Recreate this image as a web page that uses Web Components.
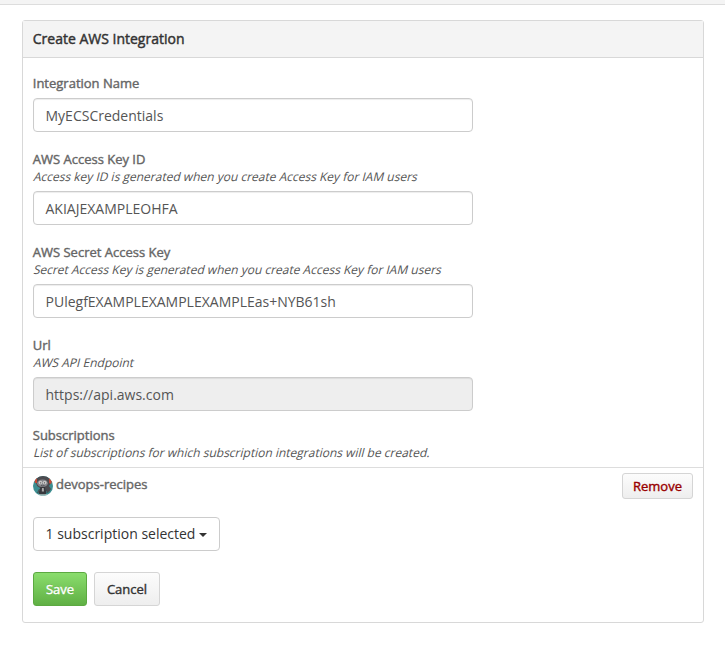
<!DOCTYPE html>
<html lang="en"><head><meta charset="utf-8"><title>Create AWS Integration</title>
<style>
html,body{margin:0;background:#fff;height:647px;overflow:hidden}
body{font:14px/20px "Open Sans","Noto Sans",sans-serif;color:#555}
</style></head><body>
<integration-page></integration-page>
<script>
class FormField extends HTMLElement{
  connectedCallback(){
    const hint=this.getAttribute('hint');
    this.attachShadow({mode:'open'}).innerHTML=`<style>
:host{display:block}
.label{font-size:13px;line-height:18px;color:#666;margin-left:-.25px;-webkit-text-stroke:.4px #666}
.hint{width:max-content;margin-left:.75px;font-size:12px;line-height:17px;color:#555;transform:skewX(-14deg)}
.box{box-sizing:border-box;width:440px;height:34px;border:1px solid #ccc;border-radius:4px;padding:6px 11.5px;line-height:22px;font-size:14px;color:#555;box-shadow:inset 0 1px 1px rgba(0,0,0,.075);margin-top:6px}
:host([disabled]) .box{background:#eee}
:host([bare]) .box{display:none}
</style><div class="label">${this.getAttribute('label')}</div>${hint?`<div class="hint">${hint}</div>`:''}<div class="box"><slot></slot></div>`;
  }
}
customElements.define('form-field',FormField);

class UiButton extends HTMLElement{
  connectedCallback(){
    this.attachShadow({mode:'open'}).innerHTML=`<style>
:host{display:inline-flex;box-sizing:border-box;height:34px;align-items:center;justify-content:center;border:1px solid #d5d5d5;border-radius:3px;font-size:13px;line-height:20px;color:#333;background:linear-gradient(#fcfcfc,#eee)}
:host([kind=save]){color:#fff;border-color:#5ca941;background:linear-gradient(#8add6d,#60b044);-webkit-text-stroke:.4px #fff;text-shadow:0 -1px 0 rgba(0,0,0,.15)}
:host([kind=remove]){height:26px;color:#900;-webkit-text-stroke:.4px #900}
:host([kind=cancel]){-webkit-text-stroke:.4px #333}
:host([kind=select]){background:#fff;border-color:#ccc;border-radius:4px;font-size:14px}
.caret{display:none}
:host([kind=select]) .caret{display:block;margin:2px 0 0 4px;border:4px solid transparent;border-top-color:#333;border-bottom:0}
</style><slot></slot><span class="caret"></span>`;
  }
}
customElements.define('ui-button',UiButton);

class OwnerAvatar extends HTMLElement{
  connectedCallback(){
    this.attachShadow({mode:'open'}).innerHTML=`<style>:host{display:block;width:20px;height:20px}svg{display:block}</style>
<svg width="20" height="20" viewBox="0 0 20 20">
<defs><clipPath id="disc"><circle cx="10" cy="10" r="10"/></clipPath></defs>
<g clip-path="url(#disc)">
<rect width="20" height="20" fill="#3c8e91"/>
<path d="M3 2 5 0H15L17 3 18 7 16 10 18 13 16 16 13 15 12 12H7L4 10 3 7Z" fill="#4c4b50"/>
<path d="M1 3 4 2 4 7 2 7ZM16 2 19 5 18 8 16 7Z" fill="#c64835"/>
<ellipse cx="9.5" cy="7.3" rx="5.3" ry="3.8" fill="#85858a"/>
<circle cx="7.5" cy="6.6" r="1.9" fill="#c8c7c7"/><circle cx="11.7" cy="6.6" r="1.9" fill="#c8c7c7"/>
<circle cx="7.7" cy="6.8" r=".6" fill="#444"/><circle cx="11.5" cy="6.8" r=".6" fill="#444"/>
<path d="M8 9.4 9.7 10 11.5 9.4" fill="none" stroke="#4b4b4f" stroke-width=".8"/>
<path d="M7.5 11H12L13.5 17 12 19H7L5.5 17Z" fill="#38383d"/>
<path d="M9 12H10.7L11 15.5H8.8Z" fill="#aaa"/>
<path d="M6.5 13 4.5 17M13 13 15 17" stroke="#47474d"/>
<path d="M5 18.3H15V20H5Z" fill="#a7c4c3"/>
</g></svg>`;
  }
}
customElements.define('owner-avatar',OwnerAvatar);

class IntegrationPage extends HTMLElement{
  connectedCallback(){
    this.attachShadow({mode:'open'}).innerHTML=`<style>
:host{display:block}
.bar{height:4px;background:#f4f4f4;border-bottom:1px solid #ddd}
.panel{box-sizing:border-box;width:682px;height:603px;margin:15px 0 0 22px;border:1px solid #d8d8d8;border-radius:3px}
.head{box-sizing:border-box;height:37px;padding:8px 9.75px;background:#f4f4f4;border-bottom:1px solid #d8d8d8;color:#333;-webkit-text-stroke:.45px #333}
.fields{padding:16px 10px 0;display:flex;flex-direction:column}
.row{display:flex;justify-content:space-between;border-top:1px solid #ddd;padding:5px 10px 0;height:44px}
.owner{display:flex;gap:3px;padding-top:2px;font-size:13px;line-height:18px;color:#666;-webkit-text-stroke:.4px #666}
.owner owner-avatar{margin-top:1px}
.actions{display:flex;gap:7px;padding:21px 10px 0}
.select{padding:0 10px;display:flex}
</style>
<div class="bar"></div>
<div class="panel"><div class="head">Create AWS Integration</div>
<div class="fields">
<form-field label="Integration Name">MyECSCredentials</form-field>
<form-field style="margin-top:18px" label="AWS Access Key ID" hint="Access key ID is generated when you create Access Key for IAM users">AKIAJEXAMPLEOHFA</form-field>
<form-field style="margin-top:18px" label="AWS Secret Access Key" hint="Secret Access Key is generated when you create Access Key for IAM users">PUlegfEXAMPLEXAMPLEXAMPLEas+NYB61sh</form-field>
<form-field style="margin-top:18px" disabled label="Url" hint="AWS API Endpoint">https://api.aws.com</form-field>
<form-field style="margin-top:15px;height:41px" bare label="Subscriptions" hint="List of subscriptions for which subscription integrations will be created."></form-field>
</div>
<div class="row"><div class="owner"><owner-avatar></owner-avatar><span>devops-recipes</span></div><ui-button kind="remove" style="width:71px">Remove</ui-button></div>
<div class="select"><ui-button kind="select" style="width:187px">1 subscription selected</ui-button></div>
<div class="actions"><ui-button kind="save" style="width:54px">Save</ui-button><ui-button kind="cancel" style="width:66px">Cancel</ui-button></div>
</div>`;
  }
}
customElements.define('integration-page',IntegrationPage);
</script></body></html>
